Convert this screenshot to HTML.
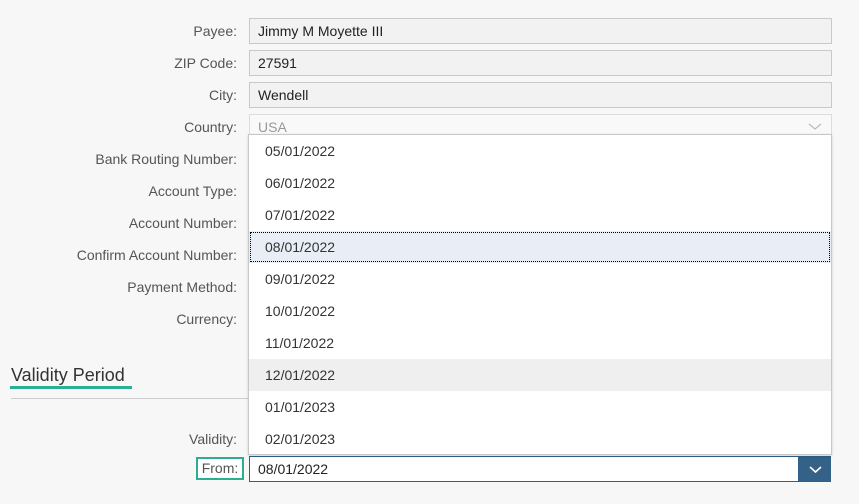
<!DOCTYPE html>
<html><head><style>
body{margin:0;width:859px;height:504px;background:#f7f7f7;font-family:"Liberation Sans",Arial,sans-serif;position:relative;overflow:hidden}
.l{position:absolute;right:622px;font-size:14px;color:#555;text-align:right;white-space:nowrap}
.in{position:absolute;left:249px;border:1px solid #c9c9c9;background:#f2f2f2;font-size:14px;color:#222;line-height:24px;padding-left:8px;box-sizing:border-box;width:583px;height:26px}
.dd{position:absolute;left:248px;top:134px;width:584px;height:321px;background:#fff;border:1px solid #c8c8c8;box-sizing:border-box;box-shadow:0 1px 3px rgba(0,0,0,.15)}
.it{height:32px;line-height:33px;padding-left:16px;font-size:14px;color:#333}
</style></head><body>
<div class="l" style="top:23px">Payee:</div><div class="in" style="top:18px">Jimmy M Moyette III</div>
<div class="l" style="top:55px">ZIP Code:</div><div class="in" style="top:50px">27591</div>
<div class="l" style="top:87px">City:</div><div class="in" style="top:82px">Wendell</div>
<div class="l" style="top:119px">Country:</div><div class="in" style="top:114px;background:#f9f9f9;border-color:#ddd;color:#999">USA</div>
<svg style="position:absolute;left:808px;top:123px" width="14" height="8"><path d="M1 1l6 5 6-5" fill="none" stroke="#bbb" stroke-width="1.2"/></svg>
<div class="l" style="top:151px">Bank Routing Number:</div>
<div class="l" style="top:183px">Account Type:</div>
<div class="l" style="top:215px">Account Number:</div>
<div class="l" style="top:247px">Confirm Account Number:</div>
<div class="l" style="top:279px">Payment Method:</div>
<div class="l" style="top:311px">Currency:</div>
<div style="position:absolute;left:11px;top:365px;font-size:18px;color:#333">Validity Period</div>
<div style="position:absolute;left:10px;top:386px;width:122px;height:3px;background:#2aaf93"></div>
<div style="position:absolute;left:11px;top:398px;width:237px;height:1px;background:#ccc"></div>
<div class="l" style="top:431px">Validity:</div>
<div style="position:absolute;left:196px;top:457px;width:48px;height:23px;border:2px solid #2aaf93;box-sizing:border-box;background:#fff;font-size:14px;color:#555;text-align:center;line-height:19px">From:</div>
<div class="in" style="top:456px;background:#fff;border-color:#346187;width:550px">08/01/2022</div>
<div style="position:absolute;left:799px;top:456px;width:32px;height:26px;background:#346187"><svg style="position:absolute;left:10px;top:10px" width="13" height="8"><path d="M1 1l5.5 5 5.5-5" fill="none" stroke="#fff" stroke-width="1.6"/></svg></div>
<div class="dd">
<div class="it">05/01/2022</div><div class="it">06/01/2022</div><div class="it">07/01/2022</div>
<div class="it" style="background:#e8edf6;outline:1px dotted #000;outline-offset:-2px">08/01/2022</div>
<div class="it">09/01/2022</div><div class="it">10/01/2022</div><div class="it">11/01/2022</div>
<div class="it" style="background:#efefef">12/01/2022</div>
<div class="it">01/01/2023</div><div class="it">02/01/2023</div>
</div>
</body></html>
